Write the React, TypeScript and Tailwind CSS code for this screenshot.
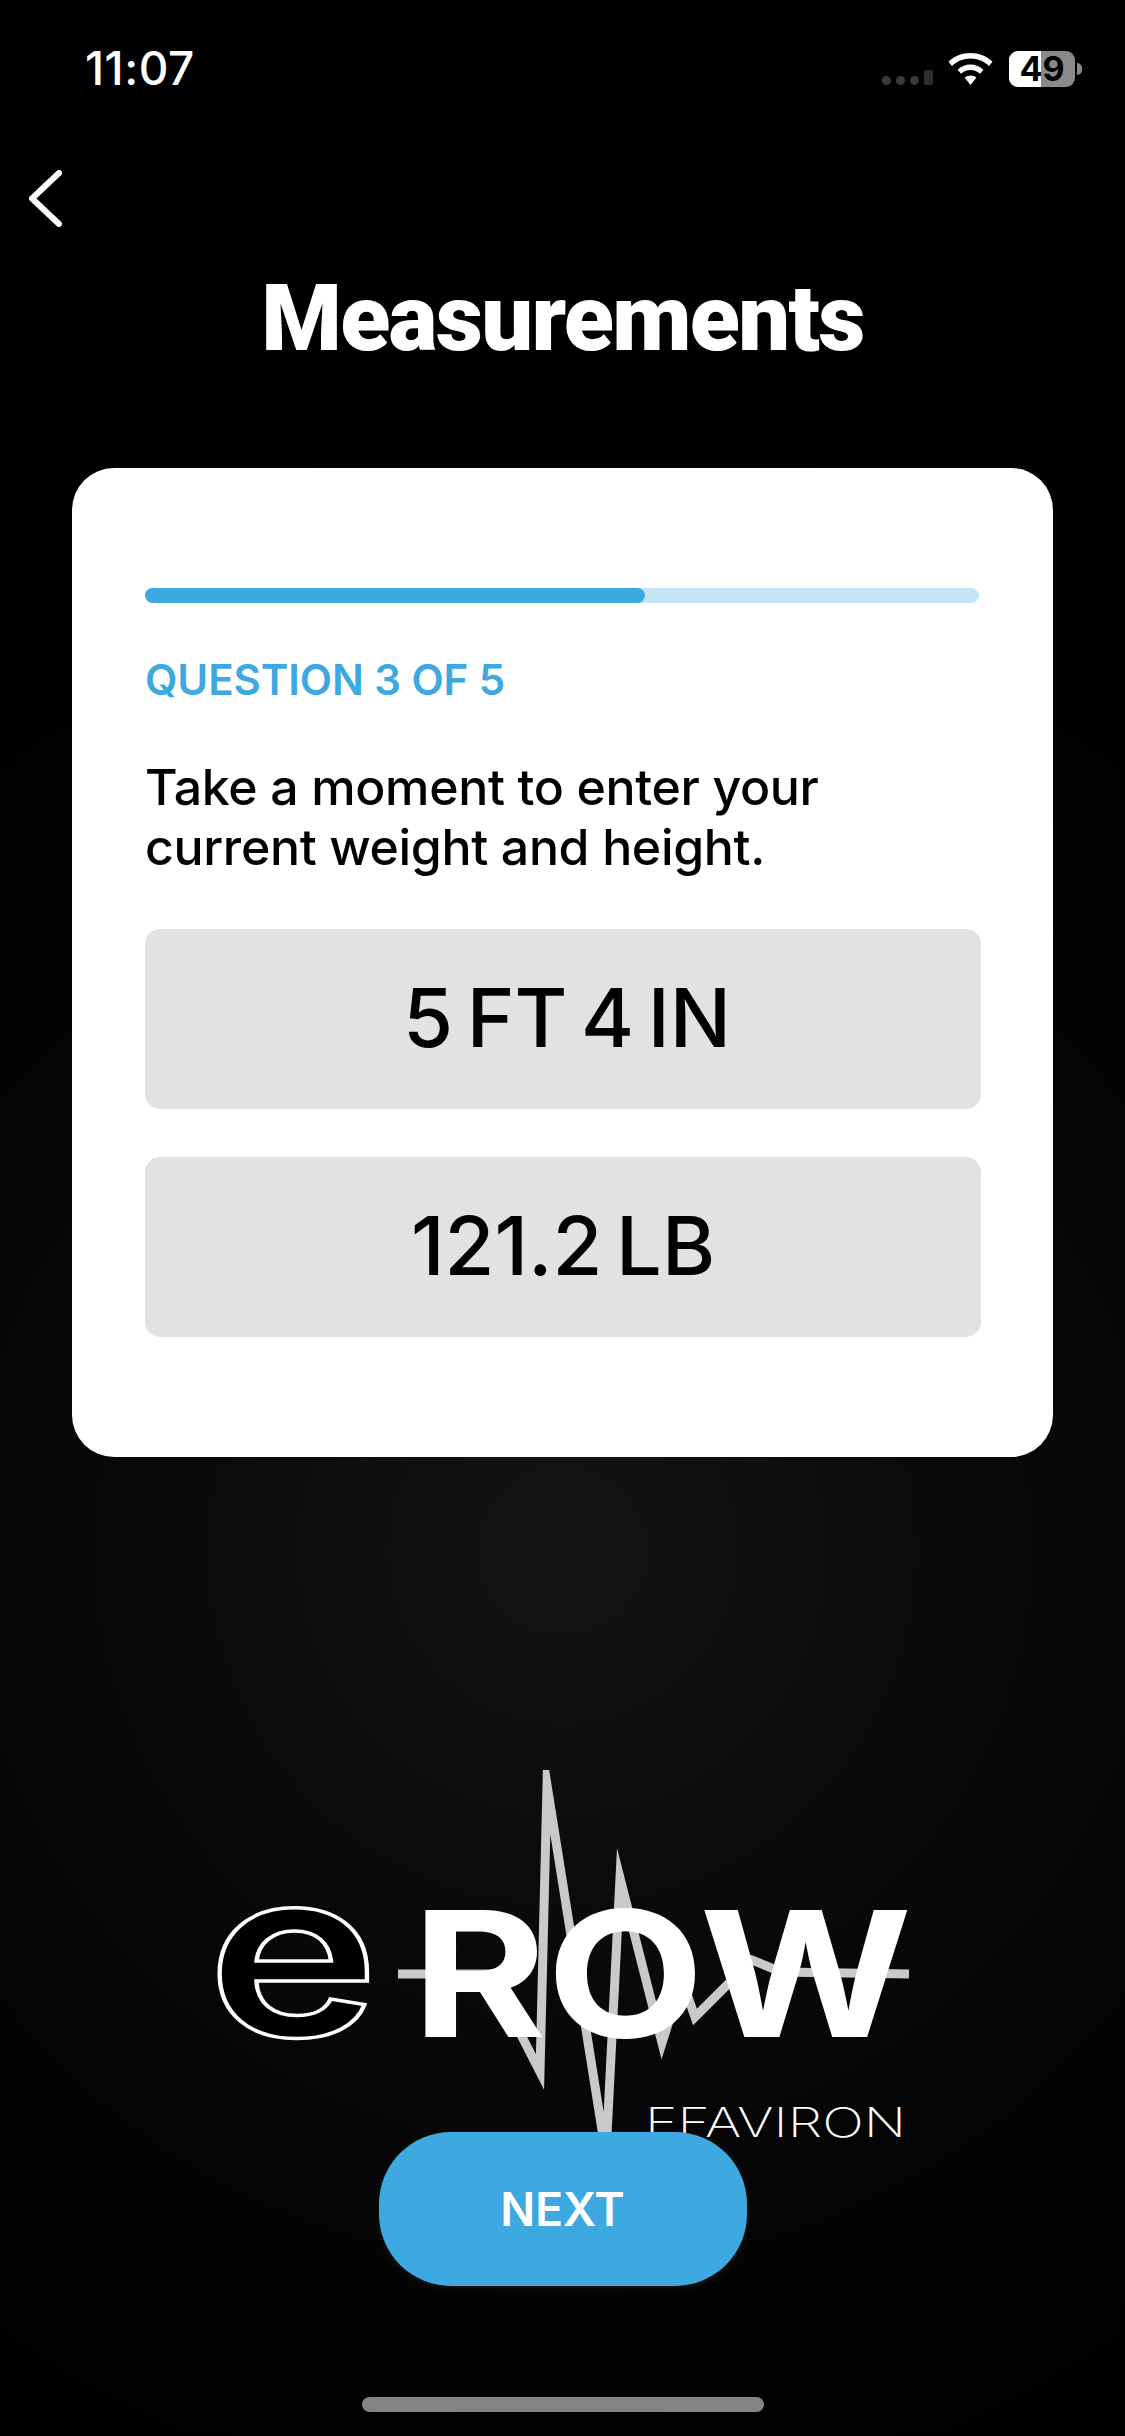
import React from "react";

const inter = "font-['Inter','Liberation_Sans',sans-serif]";

function StatusIcons() {
  return (
    <div className="flex items-center h-[36px]">
      <div className="flex items-end gap-[5px] mt-[16px] mr-[15px]">
        <div className="w-[9px] h-[9px] rounded-full bg-[#3a3a3a]" />
        <div className="w-[9px] h-[9px] rounded-full bg-[#3a3a3a]" />
        <div className="w-[9px] h-[9px] rounded-full bg-[#3a3a3a]" />
        <div className="w-[9px] h-[15px] rounded-[2px] bg-[#2e2e2e]" />
      </div>
      <svg width="45" height="33" viewBox="0 0 45 33" className="mr-[16px]">
        <path d="M22.5 0C14 0 6.200 3.300 0.500 8.800L4 13C8.800 8.400 15.300 5.500 22.500 5.500S36.200 8.400 41 13L44.500 8.800C38.800 3.300 31 0 22.500 0Z" fill="#fff" />
        <path d="M22.500 11.500C17.500 11.500 13 13.500 9.600 16.700L13 20.800C15.500 18.400 18.800 17 22.500 17S29.500 18.400 32 20.800L35.400 16.700C32 13.500 27.500 11.500 22.500 11.500Z" fill="#fff" />
        <path d="M22.500 22.500C20.300 22.500 18.200 23.400 16.700 24.800L22.500 32L28.300 24.800C26.800 23.400 24.700 22.500 22.500 22.500Z" fill="#fff" />
      </svg>
      <div className="relative w-[66px] h-[36px] rounded-[9px] bg-[#8a8a8a] flex items-center justify-center">
        <div className="absolute inset-y-0 left-0 w-[32px] rounded-l-[9px] bg-white" />
        <span className={`relative text-[34px] leading-[36px] font-bold text-black ${inter}`}>49</span>
      </div>
      <div className="w-[5px] h-[12px] ml-[2px] rounded-r-full bg-[#8a8a8a]" />
    </div>
  );
}

function Logo() {
  return (
    <svg width="725" height="380" viewBox="200 1770 725 380" className="block">
      <polyline
        points="398,1974 490,1974 540,2072 547,1785 606,2155 620,1878 662,2043 682,1980 695,2017 752,1960 781,1972 909,1974"
        fill="none"
        stroke="#c9c9c9"
        strokeWidth="9"
        strokeLinejoin="miter"
        strokeMiterlimit="40"
      />
      <text
        x="207"
        y="2036"
        fontFamily="Inter, sans-serif"
        fontWeight="600"
        fontSize="232"
        fill="#000"
        stroke="#fff"
        strokeWidth="3.5"
        textLength="172"
        lengthAdjust="spacingAndGlyphs"
      >
        e
      </text>
      <text
        x="412"
        y="2037"
        fontFamily="Inter, sans-serif"
        fontWeight="700"
        fontSize="175"
        fill="#fff"
        textLength="500"
        lengthAdjust="spacingAndGlyphs"
      >
        ROW
      </text>
      <text
        x="645"
        y="2137"
        fontFamily="Inter, sans-serif"
        fontWeight="200"
        fontSize="41"
        fill="#fff"
        textLength="261"
        lengthAdjust="spacingAndGlyphs"
      >
        EFAVIRON
      </text>
    </svg>
  );
}

export default function App() {
  return (
    <div className={`w-[1125px] h-[2436px] flex flex-col overflow-hidden bg-black bg-[radial-gradient(circle_at_50%_1550px,#141414_0px,#0a0a0a_380px,#020202_800px,#000000_1200px)] text-white ${inter}`}>
      <div className="h-[100px] flex items-start justify-between pl-[85px] pr-[43px] pt-[51px]">
        <span className="text-[46px] leading-[35px] font-medium tracking-[0.5px]">11:07</span>
        <StatusIcons />
      </div>

      <div className="h-[130px] pl-[28px] pt-[70px]">
        <svg width="34" height="57" viewBox="0 0 34 57" className="block">
          <path d="M31 3L4 28.500L31 54" fill="none" stroke="#fff" strokeWidth="6" strokeLinecap="round" strokeLinejoin="round" />
        </svg>
      </div>

      <h1 className="h-[238px] mt-[44px] text-center text-[92px] leading-[90px] tracking-[-1.7px] font-black font-['Roboto',sans-serif]">Measurements</h1>

      <div className="mx-[72px] w-[981px] h-[989px] -mt-[44px] rounded-[42px] bg-white pt-[120px] px-[73px] text-black">
        <div className="h-[15px] w-[834px] rounded-full bg-[#c5e5f6]">
          <div className="h-full w-[500px] rounded-full bg-[#3ea8e0]" />
        </div>
        <div className="mt-[54px] text-[42px] leading-[46px] font-semibold tracking-[-0.1px] text-[#3ea8e0]">QUESTION 3 OF 5</div>
        <p className="mt-[54px] text-[50px] leading-[60px] font-[550] tracking-[-0.35px]">
          Take a moment to enter your
          <br />
          current weight and height.
        </p>
        <div className="mt-[52px] w-[836px] h-[180px] pl-[8px] rounded-[15px] bg-[#e2e2e2] flex items-center justify-center text-[81px] font-medium [word-spacing:-8px]">5 FT 4 IN</div>
        <div className="mt-[48px] w-[836px] h-[180px] rounded-[15px] bg-[#e2e2e2] flex items-center justify-center text-[81px] font-medium [word-spacing:-8px]">121.2 LB</div>
      </div>

      <div className="mt-[313px] ml-[200px]">
        <Logo />
      </div>

      <div className="relative -mt-[18px] mx-auto w-[368px] h-[154px] rounded-[72px] bg-[#3ea8e0] flex items-center justify-center text-[46px] font-semibold shadow-[0_2px_8px_rgba(255,255,255,0.08)]">
        NEXT
      </div>

      <div className="mt-[111px] mx-auto w-[402px] h-[15px] rounded-full bg-[#848484]" />
    </div>
  );
}
